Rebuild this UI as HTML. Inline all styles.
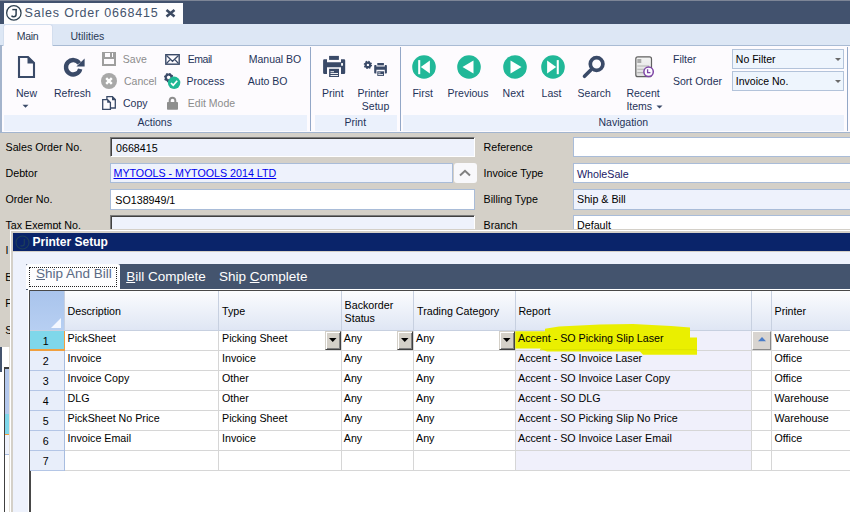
<!DOCTYPE html>
<html><head><meta charset="utf-8"><style>
html,body{margin:0;padding:0;}
body{width:850px;height:512px;overflow:hidden;position:relative;background:#d4d0c8;font-family:"Liberation Sans",sans-serif;}
.a{position:absolute;}
.t{white-space:pre;}
svg.a{overflow:visible;}
</style></head><body>
<div class="a" style="left:0px;top:0px;width:850px;height:1px;background:#7d8596;"></div>
<div class="a" style="left:0px;top:1px;width:850px;height:23px;background:#42526e;"></div>
<div class="a" style="left:4px;top:3px;width:179px;height:21px;background:#fdfdfe;"></div>
<svg class="a" style="left:0;top:0" width="30" height="24"><circle cx="13.85" cy="12.9" r="7.2" fill="none" stroke="#2e4050" stroke-width="1.3"/><path d="M16.1 9.4 V14.2 Q16.1 16.7 13.7 16.7 Q12.1 16.7 11.6 15.6" fill="none" stroke="#2e4050" stroke-width="1.5"/><path d="M12.3 9.6 H17" stroke="#2e4050" stroke-width="1.4"/></svg>
<div class="a t" style="left:24.60px;top:6.72px;font-size:12.5px;line-height:12.5px;color:#43536c;letter-spacing:0.8px;">Sales Order 0668415</div>
<svg class="a" style="left:165px;top:9px" width="11" height="9" viewBox="0 0 11 9"><path d="M1.5 1 L9.5 7.5 M9.5 1 L1.5 7.5" stroke="#3b4a62" stroke-width="2.6"/></svg>
<div class="a" style="left:0px;top:24px;width:850px;height:21px;background:#dde7f5;"></div>
<div class="a" style="left:0px;top:45px;width:850px;height:1px;background:#a9bbd4;"></div>
<div class="a" style="left:3px;top:24px;width:50px;height:22px;background:#fdfbfe;border:1px solid #d3deee;border-bottom:none;border-radius:3px 3px 0 0;box-sizing:border-box;"></div>
<div class="a t" style="left:16.80px;top:30.61px;font-size:10.5px;line-height:10.5px;color:#2a3a55;letter-spacing:-0.3px;">Main</div>
<div class="a t" style="left:70.50px;top:30.61px;font-size:10.5px;line-height:10.5px;color:#2a3a55;">Utilities</div>
<div class="a" style="left:0px;top:46px;width:850px;height:86px;background:#fdfbfe;"></div>
<div class="a" style="left:0px;top:45px;width:1.50px;height:87px;background:#a4b4cc;"></div>
<div class="a" style="left:4px;top:115px;width:303px;height:15.50px;background:#ebf1fc;"></div>
<div class="a" style="left:315px;top:115px;width:82px;height:15.50px;background:#ebf1fc;"></div>
<div class="a" style="left:403px;top:115px;width:441px;height:15.50px;background:#ebf1fc;"></div>
<div class="a" style="left:310px;top:47px;width:1px;height:84px;background:#93a7c7;"></div>
<div class="a" style="left:400px;top:47px;width:1px;height:84px;background:#93a7c7;"></div>
<div class="a" style="left:847px;top:47px;width:1px;height:84px;background:#93a7c7;"></div>
<div class="a" style="left:0px;top:131.50px;width:850px;height:2px;background:#a3b5cf;"></div>
<div class="a t" style="left:16px;top:87.71px;font-size:10.5px;line-height:10.5px;color:#1f3359;">New</div>
<div class="a t" style="left:54px;top:87.71px;font-size:10.5px;line-height:10.5px;color:#1f3359;">Refresh</div>
<div class="a t" style="left:122.80px;top:53.61px;font-size:10.5px;line-height:10.5px;color:#8c8c8c;">Save</div>
<div class="a t" style="left:124px;top:75.51px;font-size:10.5px;line-height:10.5px;color:#8c8c8c;">Cancel</div>
<div class="a t" style="left:123px;top:97.81px;font-size:10.5px;line-height:10.5px;color:#1f3359;">Copy</div>
<div class="a t" style="left:187.80px;top:53.61px;font-size:10.5px;line-height:10.5px;color:#1f3359;letter-spacing:-0.5px;">Email</div>
<div class="a t" style="left:186.50px;top:75.51px;font-size:10.5px;line-height:10.5px;color:#1f3359;">Process</div>
<div class="a t" style="left:187.80px;top:97.81px;font-size:10.5px;line-height:10.5px;color:#8c8c8c;">Edit Mode</div>
<div class="a t" style="left:248.75px;top:53.81px;font-size:10.5px;line-height:10.5px;color:#1f3359;">Manual BO</div>
<div class="a t" style="left:247.80px;top:75.61px;font-size:10.5px;line-height:10.5px;color:#1f3359;">Auto BO</div>
<div class="a t" style="left:322px;top:87.71px;font-size:10.5px;line-height:10.5px;color:#1f3359;">Print</div>
<div class="a t" style="left:357.50px;top:87.71px;font-size:10.5px;line-height:10.5px;color:#1f3359;">Printer</div>
<div class="a t" style="left:361.80px;top:100.71px;font-size:10.5px;line-height:10.5px;color:#1f3359;">Setup</div>
<div class="a t" style="left:412.40px;top:87.91px;font-size:10.5px;line-height:10.5px;color:#1f3359;">First</div>
<div class="a t" style="left:447.60px;top:87.91px;font-size:10.5px;line-height:10.5px;color:#1f3359;">Previous</div>
<div class="a t" style="left:502.60px;top:87.81px;font-size:10.5px;line-height:10.5px;color:#1f3359;">Next</div>
<div class="a t" style="left:541.60px;top:87.81px;font-size:10.5px;line-height:10.5px;color:#1f3359;">Last</div>
<div class="a t" style="left:577.60px;top:87.81px;font-size:10.5px;line-height:10.5px;color:#1f3359;">Search</div>
<div class="a t" style="left:626.40px;top:87.91px;font-size:10.5px;line-height:10.5px;color:#1f3359;">Recent</div>
<div class="a t" style="left:626.40px;top:100.81px;font-size:10.5px;line-height:10.5px;color:#1f3359;">Items</div>
<div class="a t" style="left:673px;top:54.01px;font-size:10.5px;line-height:10.5px;color:#1f3359;">Filter</div>
<div class="a t" style="left:673px;top:76.11px;font-size:10.5px;line-height:10.5px;color:#1f3359;">Sort Order</div>
<div class="a t" style="left:137.50px;top:117.11px;font-size:10.5px;line-height:10.5px;color:#1f3359;">Actions</div>
<div class="a t" style="left:344.50px;top:117.11px;font-size:10.5px;line-height:10.5px;color:#1f3359;">Print</div>
<div class="a t" style="left:598.50px;top:117.11px;font-size:10.5px;line-height:10.5px;color:#1f3359;">Navigation</div>
<div class="a" style="left:732px;top:49px;width:112px;height:20px;background:#eef5fd;border:1px solid #b3c3da;box-sizing:border-box;"></div>
<div class="a t" style="left:735.80px;top:54.11px;font-size:10.5px;line-height:10.5px;color:#000;">No Filter</div>
<svg class="a" style="left:834.5px;top:58px" width="6" height="4"><path d="M0 0 H6 L3 3 Z" fill="#6a6a6a"/></svg>
<div class="a" style="left:732px;top:71px;width:112px;height:20px;background:#eef5fd;border:1px solid #b3c3da;box-sizing:border-box;"></div>
<div class="a t" style="left:735.80px;top:76.11px;font-size:10.5px;line-height:10.5px;color:#000;">Invoice No.</div>
<svg class="a" style="left:834.5px;top:80px" width="6" height="4"><path d="M0 0 H6 L3 3 Z" fill="#6a6a6a"/></svg>
<svg class="a" style="left:0;top:0" width="850" height="132" viewBox="0 0 850 132"><path d="M19 57 H28 L34 63 V77 H19 Z" fill="none" stroke="#3a4a68" stroke-width="2.1"/><path d="M27.5 56 L35 63.5 H27.5 Z" fill="#3a4a68"/><path d="M22.5 104.8 H28.5 L25.5 107.8 Z" fill="#3a4a68"/><path d="M80.2 68.94 A7.2 7.2 0 1 1 79.3 63.4" fill="none" stroke="#3a4a68" stroke-width="4.4"/><path d="M84.6 58.6 V66.6 H76.4 Z" fill="#3a4a68"/><path d="M102 52 H116 V66 H102 Z M105 53 V57 H110 V53 Z M112 53 V57 H113 V53 Z M104 59 V64 H114 V59 Z" fill="#9e9e9e" fill-rule="evenodd"/><circle cx="109" cy="81" r="8" fill="#a8a8a8"/><path d="M106.2 78.2 L111.8 83.8 M111.8 78.2 L106.2 83.8" stroke="#fff" stroke-width="2.4"/><path d="M106.9 99 V96.7 H112.4 L115.3 99.6 V108 H111" fill="none" stroke="#3a4a68" stroke-width="1.3"/><path d="M112 96.2 L116 100.2 H112 Z" fill="#3a4a68"/><path d="M102.7 99.6 H107.6 L110.4 102.4 V109.3 H102.7 Z" fill="none" stroke="#3a4a68" stroke-width="1.3"/><path d="M107.2 99 L111 102.8 H107.2 Z" fill="#3a4a68"/><rect x="165.8" y="54.7" width="13.4" height="9.5" fill="none" stroke="#3a4a68" stroke-width="1.4"/><path d="M166.5 55.5 L172.5 61.3 L178.5 55.5 M166.5 63.5 L170.3 59.3 M178.5 63.5 L174.7 59.3" fill="none" stroke="#3a4a68" stroke-width="1.2"/><circle cx="168.7" cy="77.6" r="3.2" fill="none" stroke="#3a4a68" stroke-width="3" stroke-dasharray="1.25 1.26"/><circle cx="168.7" cy="77.6" r="3" fill="none" stroke="#3a4a68" stroke-width="2"/><circle cx="174.1" cy="82.8" r="6.2" fill="#1fb895"/><path d="M171 83 L173.2 85.2 L177.2 80.8" fill="none" stroke="#fff" stroke-width="1.7"/><path d="M169.7 102.5 V100.5 A2.8 2.8 0 0 1 175.3 100.5 V102.5" fill="none" stroke="#8e8e8e" stroke-width="2"/><rect x="167" y="102" width="11" height="7.7" rx="0.8" fill="#8e8e8e"/><rect x="329.1" y="55.9" width="9.8" height="4" fill="#3a4a68"/><path d="M324.3 59.3 H327 V62.2 H341 V59.3 H344 Q345.2 59.3 345.2 60.5 V72.7 Q345.2 73.9 344 73.9 H341 V67.3 H327 V73.9 H324.3 Q323.1 73.9 323.1 72.7 V60.5 Q323.1 59.3 324.3 59.3 Z" fill="#3a4a68"/><rect x="329.1" y="68.8" width="9.9" height="8.2" fill="#3a4a68"/><path d="M330.5 71.7 H334 M330.5 73.5 H338 M330.5 75.5 H338" stroke="#fff" stroke-width="0.9"/><rect x="341.1" y="63.1" width="1.9" height="2.6" fill="#fff"/><circle cx="367.9" cy="64.9" r="2.9" fill="none" stroke="#3a4a68" stroke-width="2.6" stroke-dasharray="1.14 1.14"/><circle cx="367.9" cy="64.9" r="2.3" fill="none" stroke="#3a4a68" stroke-width="2.2"/><rect x="377.3" y="63" width="6.6" height="2.4" fill="#3a4a68"/><path d="M375 64.9 H376.4 V66.6 H384.8 V64.9 H386.1 Q386.9 64.9 386.9 65.7 V72.8 Q386.9 73.6 386.1 73.6 H384.8 V69.8 H376.4 V73.6 H375 Q374.2 73.6 374.2 72.8 V65.7 Q374.2 64.9 375 64.9 Z" fill="#3a4a68"/><rect x="377.3" y="71.3" width="6.7" height="4.6" fill="#3a4a68"/><path d="M378.2 72.9 H380.5 M378.2 74.5 H383" stroke="#fff" stroke-width="0.8"/><circle cx="596.6" cy="64" r="6.3" fill="none" stroke="#3a4a68" stroke-width="3.7"/><path d="M590.8 70 L584.5 76.3" stroke="#3a4a68" stroke-width="3.6" stroke-linecap="round"/><defs><linearGradient id="rg" x1="0" y1="0" x2="0" y2="1"><stop offset="0" stop-color="#f4f4f4"/><stop offset="1" stop-color="#dedede"/></linearGradient></defs><rect x="635.8" y="56.9" width="15.7" height="19.8" rx="2" fill="url(#rg)" stroke="#606060" stroke-width="1.2"/><rect x="637.3" y="59" width="4" height="4" fill="#aaa"/><path d="M637.3 66 H649 M637.3 69.3 H645 M637.3 72.6 H644" stroke="#b2b2b2" stroke-width="1.1"/><circle cx="648.6" cy="71.8" r="4.7" fill="#fcfaff" stroke="#7e45a6" stroke-width="1.5"/><path d="M647.6 69.2 V72.7 H650.4" fill="none" stroke="#7e45a6" stroke-width="1.3"/><path d="M656.5 105.5 H662.5 L659.5 108.5 Z" fill="#3a4a68"/></svg>
<svg class="a" style="left:412px;top:55.2px" width="24" height="24" viewBox="0 0 24 24"><circle cx="12" cy="12" r="11.8" fill="#21b898"/><rect x="6.2" y="5.1" width="2.05" height="14.1" fill="#fff"/><path d="M8.8 12 L17.9 5.6 V18.6 Z" fill="#fff"/></svg>
<svg class="a" style="left:457px;top:55.2px" width="24" height="24" viewBox="0 0 24 24"><circle cx="12" cy="12" r="11.8" fill="#21b898"/><path d="M5.5 12 L16.5 5.6 V18.4 Z" fill="#fff"/></svg>
<svg class="a" style="left:503px;top:55.2px" width="24" height="24" viewBox="0 0 24 24"><circle cx="12" cy="12" r="11.8" fill="#21b898"/><path d="M18.5 12 L7.5 5.6 V18.4 Z" fill="#fff"/></svg>
<svg class="a" style="left:541px;top:55.2px" width="24" height="24" viewBox="0 0 24 24"><circle cx="12" cy="12" r="11.8" fill="#21b898"/><rect x="15.75" y="5.1" width="2.05" height="14.1" fill="#fff"/><path d="M15.2 12 L6.1 5.6 V18.6 Z" fill="#fff"/></svg>
<div class="a" style="left:0px;top:133px;width:850px;height:100px;background:#d4d0c8;"></div>
<div class="a t" style="left:5.50px;top:141.94px;font-size:10.7px;line-height:10.7px;color:#000;">Sales Order No.</div>
<div class="a t" style="left:5.50px;top:168.14px;font-size:10.7px;line-height:10.7px;color:#000;">Debtor</div>
<div class="a t" style="left:5.50px;top:194.34px;font-size:10.7px;line-height:10.7px;color:#000;">Order No.</div>
<div class="a t" style="left:5.50px;top:219.54px;font-size:10.7px;line-height:10.7px;color:#000;">Tax Exempt No.</div>
<div class="a" style="left:110px;top:137px;width:365px;height:20px;background:#eef2fc;border-top:1px solid #7a7a7a;border-left:1px solid #7a7a7a;border-right:1px solid #fff;border-bottom:1px solid #fff;box-shadow:inset 1px 1px 0 #404040;box-sizing:border-box;"></div>
<div class="a t" style="left:116px;top:142.84px;font-size:10.7px;line-height:10.7px;color:#000;">0668415</div>
<div class="a" style="left:110px;top:163px;width:343px;height:20px;background:#eef2fc;border:1px solid #a9bcd8;box-sizing:border-box;"></div>
<div class="a t" style="left:113.50px;top:167.94px;font-size:10.7px;line-height:10.7px;color:#0000ee;text-decoration:underline;">MYTOOLS - MYTOOLS 2014 LTD</div>
<div class="a" style="left:454px;top:163px;width:23px;height:20px;background:#f8f8fb;border-radius:3px;"></div>
<svg class="a" style="left:459px;top:169px" width="12" height="8"><path d="M1 6.5 L6 1.8 L11 6.5" fill="none" stroke="#808080" stroke-width="2"/></svg>
<div class="a" style="left:110px;top:189px;width:365px;height:21px;background:#fff;border:1px solid #a9bcd8;box-sizing:border-box;"></div>
<div class="a t" style="left:115.30px;top:194.94px;font-size:10.7px;line-height:10.7px;color:#000;">SO138949/1</div>
<div class="a" style="left:110px;top:215px;width:365px;height:20px;background:#eef2fc;border-top:1px solid #7a7a7a;border-left:1px solid #7a7a7a;border-right:1px solid #fff;border-bottom:1px solid #fff;box-shadow:inset 1px 1px 0 #404040;box-sizing:border-box;"></div>
<div class="a t" style="left:483.50px;top:141.94px;font-size:10.7px;line-height:10.7px;color:#000;">Reference</div>
<div class="a t" style="left:483.50px;top:167.94px;font-size:10.7px;line-height:10.7px;color:#000;">Invoice Type</div>
<div class="a t" style="left:483.50px;top:193.94px;font-size:10.7px;line-height:10.7px;color:#000;">Billing Type</div>
<div class="a t" style="left:483.50px;top:219.74px;font-size:10.7px;line-height:10.7px;color:#000;">Branch</div>
<div class="a" style="left:573px;top:137px;width:290px;height:20px;background:#fff;border:1px solid #a9bcd8;box-sizing:border-box;"></div>
<div class="a" style="left:573px;top:163px;width:290px;height:20px;background:#fff;border:1px solid #a9bcd8;box-sizing:border-box;"></div>
<div class="a t" style="left:577px;top:168.94px;font-size:10.7px;line-height:10.7px;color:#1a1a66;">WholeSale</div>
<div class="a" style="left:573px;top:189px;width:290px;height:21px;background:#eef2fc;border:1px solid #a9bcd8;box-sizing:border-box;"></div>
<div class="a t" style="left:577px;top:194.44px;font-size:10.7px;line-height:10.7px;color:#000;">Ship &amp; Bill</div>
<div class="a" style="left:573px;top:215px;width:290px;height:20px;background:#fff;border:1px solid #a9bcd8;box-sizing:border-box;"></div>
<div class="a t" style="left:577px;top:220.44px;font-size:10.7px;line-height:10.7px;color:#000;">Default</div>
<div class="a" style="left:0px;top:233px;width:10px;height:279px;background:#d4d0c8;"></div>
<div class="a t" style="left:5.50px;top:244.94px;font-size:10.7px;line-height:10.7px;color:#000;">I</div>
<div class="a t" style="left:5.20px;top:272.14px;font-size:10.7px;line-height:10.7px;color:#000;">B</div>
<div class="a t" style="left:5.20px;top:297.94px;font-size:10.7px;line-height:10.7px;color:#000;">F</div>
<div class="a t" style="left:5.20px;top:324.94px;font-size:10.7px;line-height:10.7px;color:#000;">S</div>
<div class="a" style="left:10px;top:229px;width:840px;height:283px;background:#d4d0c8;"></div>
<div class="a" style="left:10px;top:230px;width:840px;height:282px;background:#fff;"></div>
<div class="a" style="left:11px;top:231px;width:839px;height:281px;background:#d4d0c8;"></div>
<div class="a" style="left:13px;top:233px;width:837px;height:18px;background:#0a246a;"></div>
<div class="a" style="left:13px;top:252px;width:837px;height:260px;background:#eef2fc;"></div>
<svg class="a" style="left:15px;top:235px" width="15" height="15"><circle cx="7.5" cy="7.5" r="6.5" fill="none" stroke="#1e3e5a" stroke-width="1.2"/><path d="M9.3 4 V8.8 Q9.3 10.8 7.3 10.8 H5.5" fill="none" stroke="#1e3e5a" stroke-width="1.2"/></svg>
<div class="a t" style="left:32.50px;top:235.64px;font-size:12px;line-height:12px;color:#fff;font-weight:bold;">Printer Setup</div>
<div class="a" style="left:26px;top:264px;width:824px;height:26px;background:#44546e;"></div>
<div class="a" style="left:26px;top:264px;width:94px;height:25px;background:#fdfdfe;border-radius:2px 2px 0 0;"></div>
<div class="a" style="left:29px;top:266.50px;width:88px;height:20.50px;border:1px dotted #222;box-sizing:border-box;"></div>
<div class="a t" style="left:36px;top:267.17px;font-size:13.5px;line-height:13.5px;color:#5a6a84;"><u>S</u>hip And Bill</div>
<div class="a t" style="left:126.20px;top:269.67px;font-size:13.5px;line-height:13.5px;color:#fff;"><u>B</u>ill Complete</div>
<div class="a t" style="left:219px;top:269.67px;font-size:13.5px;line-height:13.5px;color:#fff;">Ship <u>C</u>omplete</div>
<div class="a" style="left:28px;top:289px;width:822px;height:223px;background:#fff;"></div>
<div class="a" style="left:28.50px;top:289.50px;width:822px;height:2px;background:#484848;"></div>
<div class="a" style="left:28.50px;top:289.50px;width:2px;height:223px;background:#484848;"></div>
<div class="a" style="left:30px;top:291px;width:820px;height:39px;background:linear-gradient(#fbfcfe,#dfe6f4);"></div>
<div class="a" style="left:30px;top:291px;width:34px;height:39px;background:linear-gradient(#a9c4ec,#b7cff2);"></div>
<svg class="a" style="left:51px;top:318px" width="11" height="11"><path d="M10 0 V10 H0 Z" fill="#f4f8ff"/></svg>
<div class="a" style="left:64px;top:291px;width:1px;height:39px;background:#c7d0e0;"></div>
<div class="a" style="left:218px;top:291px;width:1px;height:39px;background:#c7d0e0;"></div>
<div class="a" style="left:341px;top:291px;width:1px;height:39px;background:#c7d0e0;"></div>
<div class="a" style="left:413px;top:291px;width:1px;height:39px;background:#c7d0e0;"></div>
<div class="a" style="left:515px;top:291px;width:1px;height:39px;background:#c7d0e0;"></div>
<div class="a" style="left:751px;top:291px;width:1px;height:39px;background:#c7d0e0;"></div>
<div class="a" style="left:771px;top:291px;width:1px;height:39px;background:#c7d0e0;"></div>
<div class="a" style="left:30px;top:329.50px;width:820px;height:1px;background:#c7d0e0;"></div>
<div class="a t" style="left:67.50px;top:305.84px;font-size:10.7px;line-height:10.7px;color:#000;">Description</div>
<div class="a t" style="left:222px;top:305.84px;font-size:10.7px;line-height:10.7px;color:#000;">Type</div>
<div class="a t" style="left:344.60px;top:299.74px;font-size:10.7px;line-height:10.7px;color:#000;">Backorder</div>
<div class="a t" style="left:344.60px;top:312.94px;font-size:10.7px;line-height:10.7px;color:#000;">Status</div>
<div class="a t" style="left:417px;top:305.94px;font-size:10.7px;line-height:10.7px;color:#000;">Trading Category</div>
<div class="a t" style="left:518.40px;top:305.84px;font-size:10.7px;line-height:10.7px;color:#000;">Report</div>
<div class="a t" style="left:774.50px;top:305.94px;font-size:10.7px;line-height:10.7px;color:#000;">Printer</div>
<div class="a" style="left:64px;top:330.50px;width:786px;height:140px;background:#fff;"></div>
<div class="a" style="left:515px;top:330.50px;width:236px;height:140px;background:#f0f0fb;"></div>
<div class="a" style="left:30px;top:330.50px;width:34px;height:20px;background:#7fd7ea;"></div>
<div class="a" style="left:30px;top:349.50px;width:820px;height:1px;background:#d6d6d6;"></div>
<div class="a" style="left:30px;top:349.50px;width:34px;height:1px;background:#b4c6e6;"></div>
<div class="a t" style="left:42.80px;top:335.94px;font-size:10.7px;line-height:10.7px;color:#000;">1</div>
<div class="a t" style="left:67.50px;top:332.94px;font-size:10.7px;line-height:10.7px;color:#000;">PickSheet</div>
<div class="a t" style="left:222px;top:332.94px;font-size:10.7px;line-height:10.7px;color:#000;">Picking Sheet</div>
<div class="a t" style="left:343.80px;top:332.94px;font-size:10.7px;line-height:10.7px;color:#000;">Any</div>
<div class="a t" style="left:416px;top:332.94px;font-size:10.7px;line-height:10.7px;color:#000;">Any</div>
<div class="a t" style="left:518px;top:333.14px;font-size:10.7px;line-height:10.7px;color:#000;">Accent - SO Picking Slip Laser</div>
<div class="a t" style="left:774.50px;top:332.94px;font-size:10.7px;line-height:10.7px;color:#000;">Warehouse</div>
<div class="a" style="left:30px;top:350.50px;width:34px;height:20px;background:#e8eefa;"></div>
<div class="a" style="left:30px;top:369.50px;width:820px;height:1px;background:#d6d6d6;"></div>
<div class="a" style="left:30px;top:369.50px;width:34px;height:1px;background:#b4c6e6;"></div>
<div class="a t" style="left:42.80px;top:355.94px;font-size:10.7px;line-height:10.7px;color:#000;">2</div>
<div class="a t" style="left:67.50px;top:352.94px;font-size:10.7px;line-height:10.7px;color:#000;">Invoice</div>
<div class="a t" style="left:222px;top:352.94px;font-size:10.7px;line-height:10.7px;color:#000;">Invoice</div>
<div class="a t" style="left:343.80px;top:352.94px;font-size:10.7px;line-height:10.7px;color:#000;">Any</div>
<div class="a t" style="left:416px;top:352.94px;font-size:10.7px;line-height:10.7px;color:#000;">Any</div>
<div class="a t" style="left:518px;top:353.14px;font-size:10.7px;line-height:10.7px;color:#000;">Accent - SO Invoice Laser</div>
<div class="a t" style="left:774.50px;top:352.94px;font-size:10.7px;line-height:10.7px;color:#000;">Office</div>
<div class="a" style="left:30px;top:370.50px;width:34px;height:20px;background:#e8eefa;"></div>
<div class="a" style="left:30px;top:389.50px;width:820px;height:1px;background:#d6d6d6;"></div>
<div class="a" style="left:30px;top:389.50px;width:34px;height:1px;background:#b4c6e6;"></div>
<div class="a t" style="left:42.80px;top:375.94px;font-size:10.7px;line-height:10.7px;color:#000;">3</div>
<div class="a t" style="left:67.50px;top:372.94px;font-size:10.7px;line-height:10.7px;color:#000;">Invoice Copy</div>
<div class="a t" style="left:222px;top:372.94px;font-size:10.7px;line-height:10.7px;color:#000;">Other</div>
<div class="a t" style="left:343.80px;top:372.94px;font-size:10.7px;line-height:10.7px;color:#000;">Any</div>
<div class="a t" style="left:416px;top:372.94px;font-size:10.7px;line-height:10.7px;color:#000;">Any</div>
<div class="a t" style="left:518px;top:373.14px;font-size:10.7px;line-height:10.7px;color:#000;">Accent - SO Invoice Laser Copy</div>
<div class="a t" style="left:774.50px;top:372.94px;font-size:10.7px;line-height:10.7px;color:#000;">Office</div>
<div class="a" style="left:30px;top:390.50px;width:34px;height:20px;background:#e8eefa;"></div>
<div class="a" style="left:30px;top:409.50px;width:820px;height:1px;background:#d6d6d6;"></div>
<div class="a" style="left:30px;top:409.50px;width:34px;height:1px;background:#b4c6e6;"></div>
<div class="a t" style="left:42.80px;top:395.94px;font-size:10.7px;line-height:10.7px;color:#000;">4</div>
<div class="a t" style="left:67.50px;top:392.94px;font-size:10.7px;line-height:10.7px;color:#000;">DLG</div>
<div class="a t" style="left:222px;top:392.94px;font-size:10.7px;line-height:10.7px;color:#000;">Other</div>
<div class="a t" style="left:343.80px;top:392.94px;font-size:10.7px;line-height:10.7px;color:#000;">Any</div>
<div class="a t" style="left:416px;top:392.94px;font-size:10.7px;line-height:10.7px;color:#000;">Any</div>
<div class="a t" style="left:518px;top:393.14px;font-size:10.7px;line-height:10.7px;color:#000;">Accent - SO DLG</div>
<div class="a t" style="left:774.50px;top:392.94px;font-size:10.7px;line-height:10.7px;color:#000;">Warehouse</div>
<div class="a" style="left:30px;top:410.50px;width:34px;height:20px;background:#e8eefa;"></div>
<div class="a" style="left:30px;top:429.50px;width:820px;height:1px;background:#d6d6d6;"></div>
<div class="a" style="left:30px;top:429.50px;width:34px;height:1px;background:#b4c6e6;"></div>
<div class="a t" style="left:42.80px;top:415.94px;font-size:10.7px;line-height:10.7px;color:#000;">5</div>
<div class="a t" style="left:67.50px;top:412.94px;font-size:10.7px;line-height:10.7px;color:#000;">PickSheet No Price</div>
<div class="a t" style="left:222px;top:412.94px;font-size:10.7px;line-height:10.7px;color:#000;">Picking Sheet</div>
<div class="a t" style="left:343.80px;top:412.94px;font-size:10.7px;line-height:10.7px;color:#000;">Any</div>
<div class="a t" style="left:416px;top:412.94px;font-size:10.7px;line-height:10.7px;color:#000;">Any</div>
<div class="a t" style="left:518px;top:413.14px;font-size:10.7px;line-height:10.7px;color:#000;">Accent - SO Picking Slip No Price</div>
<div class="a t" style="left:774.50px;top:412.94px;font-size:10.7px;line-height:10.7px;color:#000;">Warehouse</div>
<div class="a" style="left:30px;top:430.50px;width:34px;height:20px;background:#e8eefa;"></div>
<div class="a" style="left:30px;top:449.50px;width:820px;height:1px;background:#d6d6d6;"></div>
<div class="a" style="left:30px;top:449.50px;width:34px;height:1px;background:#b4c6e6;"></div>
<div class="a t" style="left:42.80px;top:435.94px;font-size:10.7px;line-height:10.7px;color:#000;">6</div>
<div class="a t" style="left:67.50px;top:432.94px;font-size:10.7px;line-height:10.7px;color:#000;">Invoice Email</div>
<div class="a t" style="left:222px;top:432.94px;font-size:10.7px;line-height:10.7px;color:#000;">Invoice</div>
<div class="a t" style="left:343.80px;top:432.94px;font-size:10.7px;line-height:10.7px;color:#000;">Any</div>
<div class="a t" style="left:416px;top:432.94px;font-size:10.7px;line-height:10.7px;color:#000;">Any</div>
<div class="a t" style="left:518px;top:433.14px;font-size:10.7px;line-height:10.7px;color:#000;">Accent - SO Invoice Laser Email</div>
<div class="a t" style="left:774.50px;top:432.94px;font-size:10.7px;line-height:10.7px;color:#000;">Office</div>
<div class="a" style="left:30px;top:450.50px;width:34px;height:20px;background:#e8eefa;"></div>
<div class="a" style="left:30px;top:469.50px;width:820px;height:1px;background:#d6d6d6;"></div>
<div class="a" style="left:30px;top:469.50px;width:34px;height:1px;background:#b4c6e6;"></div>
<div class="a t" style="left:42.80px;top:455.94px;font-size:10.7px;line-height:10.7px;color:#000;">7</div>
<div class="a t" style="left:67.50px;top:452.94px;font-size:10.7px;line-height:10.7px;color:#000;"></div>
<div class="a t" style="left:222px;top:452.94px;font-size:10.7px;line-height:10.7px;color:#000;"></div>
<div class="a t" style="left:343.80px;top:452.94px;font-size:10.7px;line-height:10.7px;color:#000;"></div>
<div class="a t" style="left:416px;top:452.94px;font-size:10.7px;line-height:10.7px;color:#000;"></div>
<div class="a t" style="left:518px;top:453.14px;font-size:10.7px;line-height:10.7px;color:#000;"></div>
<div class="a t" style="left:774.50px;top:452.94px;font-size:10.7px;line-height:10.7px;color:#000;"></div>
<div class="a" style="left:64px;top:330.50px;width:1px;height:140px;background:#d6d6d6;"></div>
<div class="a" style="left:218px;top:330.50px;width:1px;height:140px;background:#d6d6d6;"></div>
<div class="a" style="left:341px;top:330.50px;width:1px;height:140px;background:#d6d6d6;"></div>
<div class="a" style="left:413px;top:330.50px;width:1px;height:140px;background:#d6d6d6;"></div>
<div class="a" style="left:515px;top:330.50px;width:1px;height:140px;background:#d6d6d6;"></div>
<div class="a" style="left:751px;top:330.50px;width:1px;height:140px;background:#d6d6d6;"></div>
<div class="a" style="left:771px;top:330.50px;width:1px;height:140px;background:#d6d6d6;"></div>
<div class="a" style="left:64px;top:330.50px;width:1px;height:140px;background:#a8bde0;"></div>
<div class="a" style="left:30px;top:349px;width:34px;height:1.50px;background:#f0a040;"></div>
<div class="a" style="left:63.50px;top:330.50px;width:1px;height:20px;background:#f0a040;"></div>
<svg class="a" style="left:0;top:0" width="850" height="512"><path d="M515.3 331.2 H545 V328.8 L559 326.5 L600 324.5 L633 324 L671 326 L690 327.6 V337.6 H697 V354.7 H643 L640 351.5 H547 L540 348.5 H515.3 Z" fill="#eaef00"/><rect x="540" y="349.2" width="157" height="1" fill="#dde300"/></svg>
<div class="a t" style="left:518px;top:333.14px;font-size:10.7px;line-height:10.7px;color:#000;">Accent - SO Picking Slip Laser</div>
<div class="a" style="left:325px;top:331px;width:16px;height:19px;background:#d4d0c8;border-top:1px solid #d4d0c8;border-left:1px solid #d4d0c8;border-right:1px solid #404040;border-bottom:1px solid #404040;box-shadow:inset 1px 1px 0 #fff, inset -1px -1px 0 #808080;box-sizing:border-box;"></div>
<svg class="a" style="left:329px;top:338px" width="8" height="5"><path d="M0 0 H7.5 L3.75 4 Z" fill="#000"/></svg>
<div class="a" style="left:397px;top:331px;width:16px;height:19px;background:#d4d0c8;border-top:1px solid #d4d0c8;border-left:1px solid #d4d0c8;border-right:1px solid #404040;border-bottom:1px solid #404040;box-shadow:inset 1px 1px 0 #fff, inset -1px -1px 0 #808080;box-sizing:border-box;"></div>
<svg class="a" style="left:401px;top:338px" width="8" height="5"><path d="M0 0 H7.5 L3.75 4 Z" fill="#000"/></svg>
<div class="a" style="left:499px;top:331px;width:16px;height:19px;background:#d4d0c8;border-top:1px solid #d4d0c8;border-left:1px solid #d4d0c8;border-right:1px solid #404040;border-bottom:1px solid #404040;box-shadow:inset 1px 1px 0 #fff, inset -1px -1px 0 #808080;box-sizing:border-box;"></div>
<svg class="a" style="left:503px;top:338px" width="8" height="5"><path d="M0 0 H7.5 L3.75 4 Z" fill="#000"/></svg>
<div class="a" style="left:752px;top:331px;width:19px;height:19px;background:#d8d4d0;border-top:1px solid #fff;border-left:1px solid #fff;border-right:1px solid #8a8a8a;border-bottom:1px solid #8a8a8a;box-sizing:border-box;"></div>
<svg class="a" style="left:757.5px;top:336.8px" width="8" height="5"><path d="M0 4.2 H8 L4 0 Z" fill="#4a7cc8"/></svg>
<div class="a" style="left:0px;top:347px;width:10px;height:165px;background:#fff;"></div>
<div class="a" style="left:0px;top:347px;width:2px;height:25px;background:#44546e;"></div>
<div class="a" style="left:3.50px;top:367px;width:6.50px;height:145px;background:#404040;"></div>
<div class="a" style="left:5px;top:369px;width:5px;height:45px;background:#b4c8ec;"></div>
<div class="a" style="left:5px;top:414px;width:5px;height:20px;background:#7fd7ea;"></div>
<div class="a" style="left:5px;top:433.50px;width:5px;height:1px;background:#f0a040;"></div>
<div class="a" style="left:5px;top:434.50px;width:5px;height:19px;background:#eef2fc;"></div>
<div class="a" style="left:5px;top:453.50px;width:5px;height:1px;background:#a8bde0;"></div>
<div class="a" style="left:5px;top:454.50px;width:5px;height:58px;background:#fff;"></div>
<div class="a" style="left:9px;top:347px;width:1px;height:165px;background:#e4e0d8;"></div>
</body></html>
